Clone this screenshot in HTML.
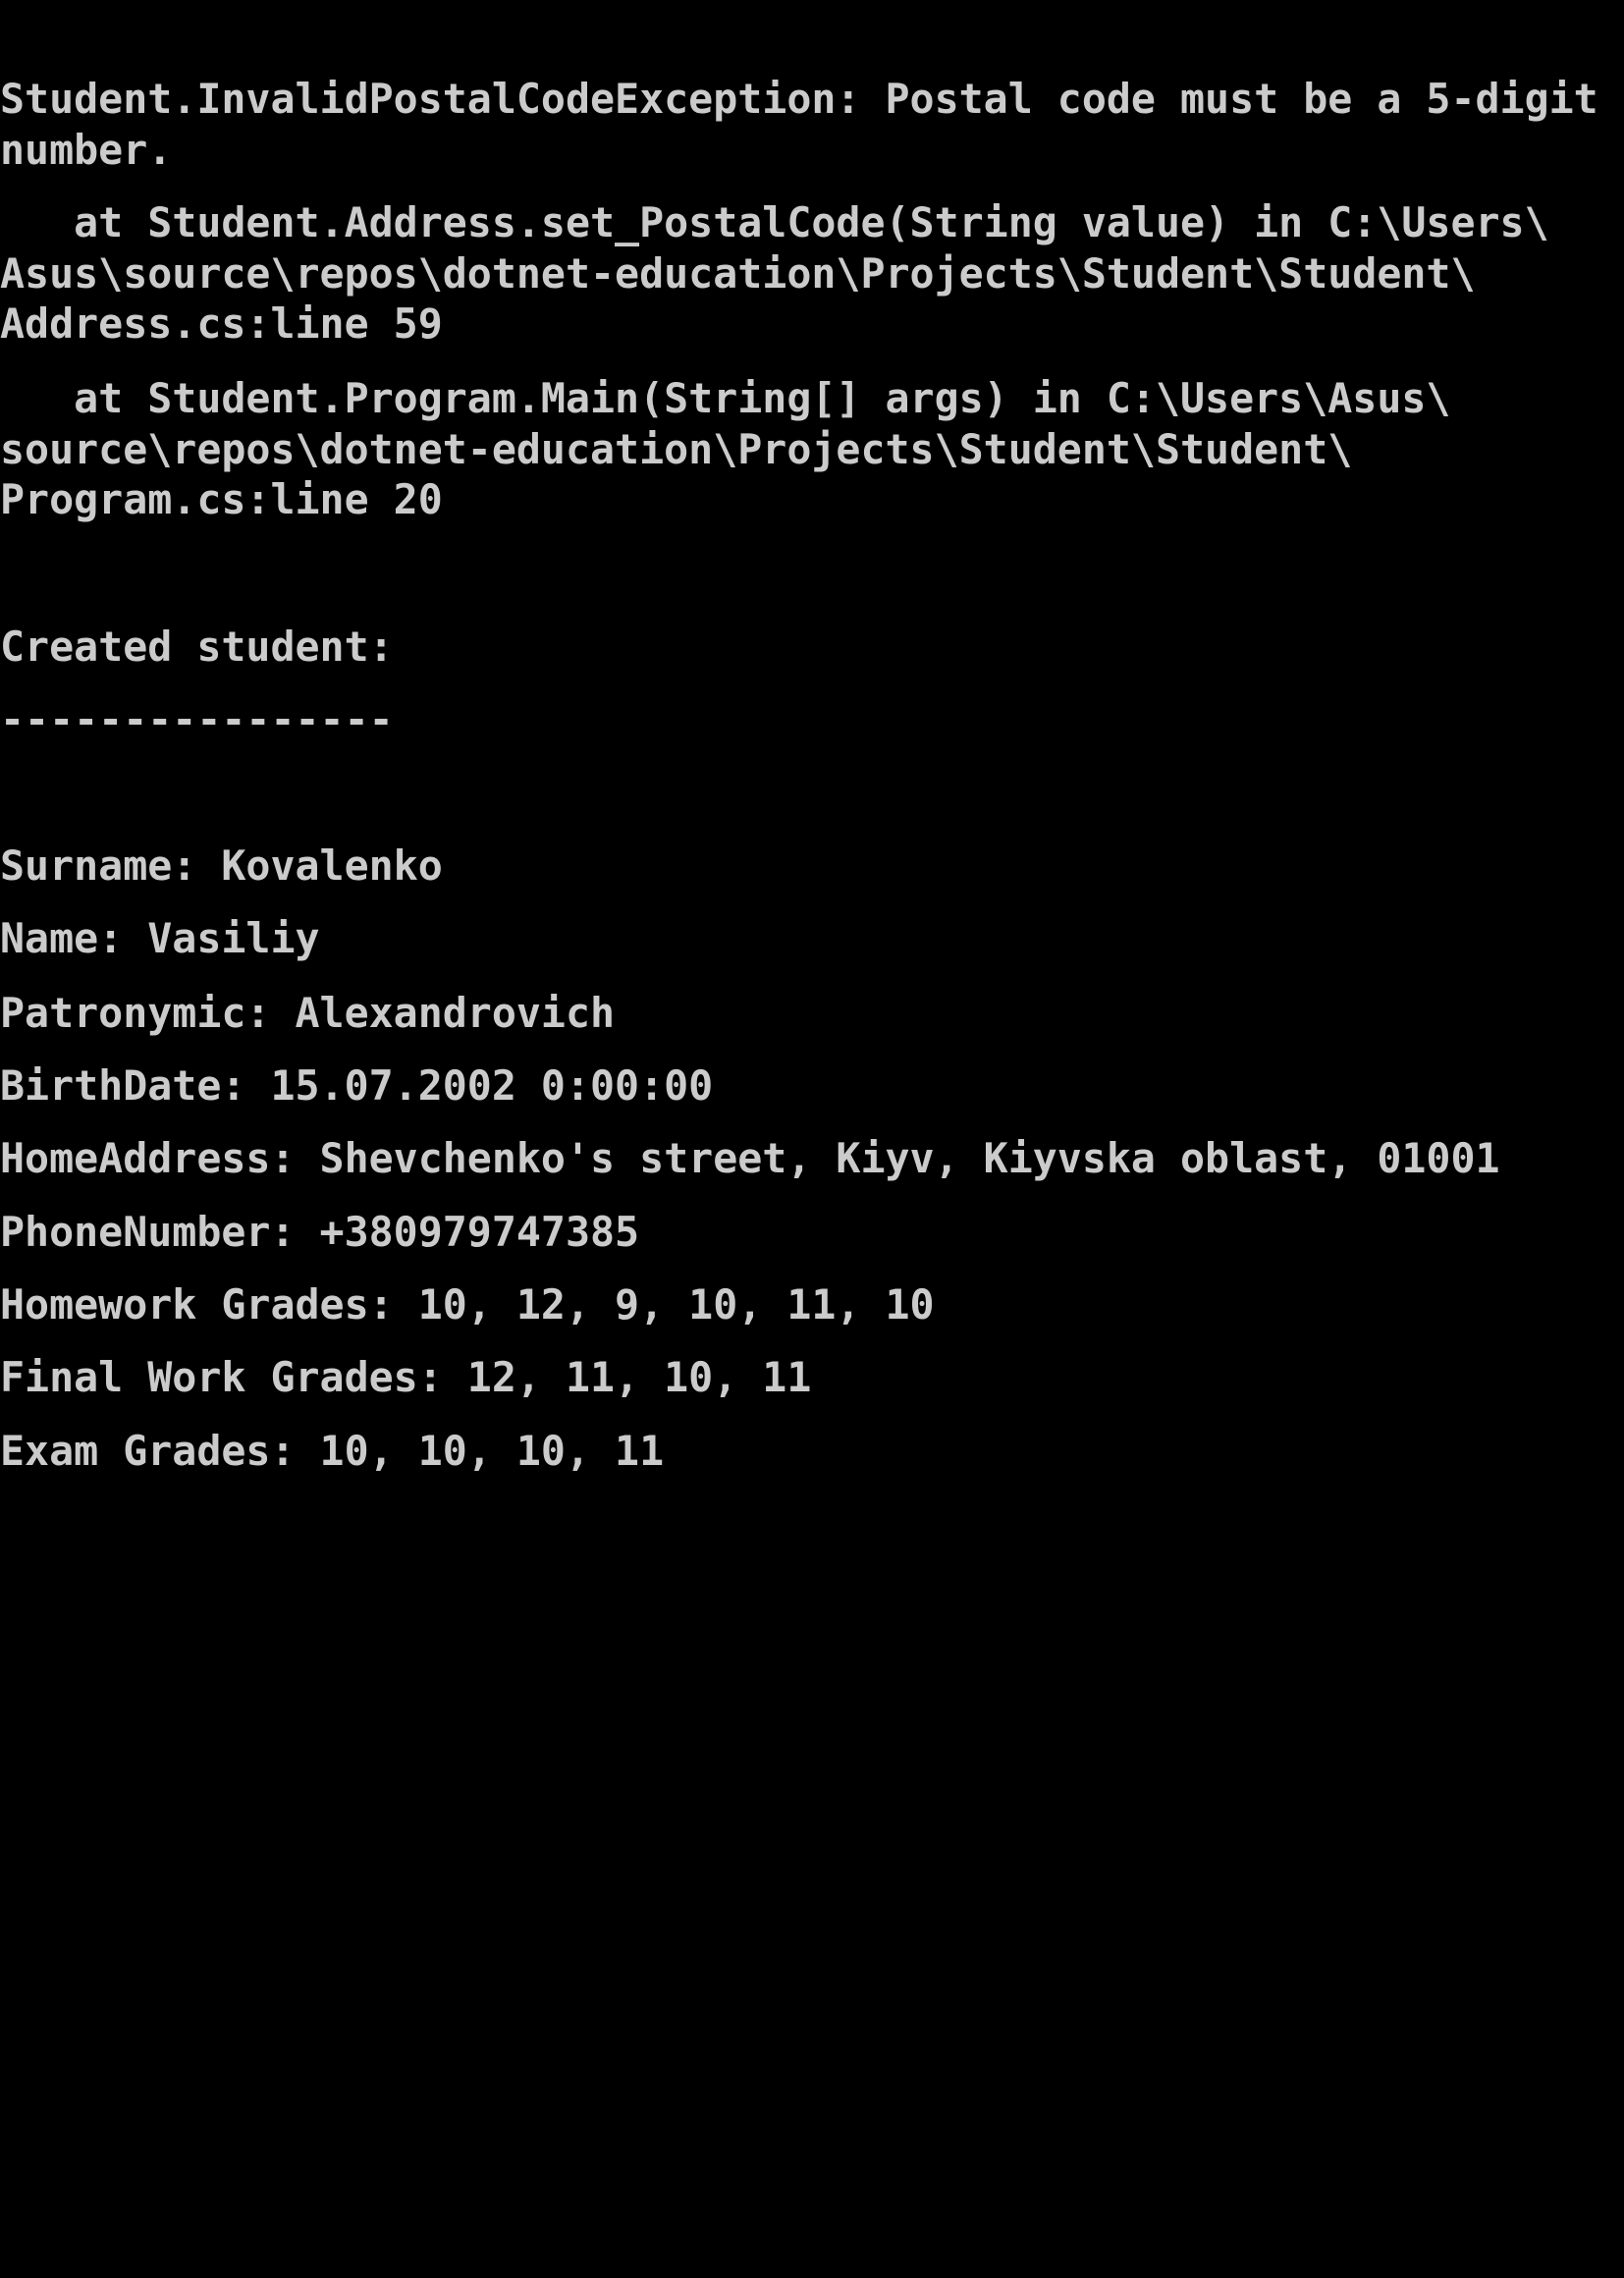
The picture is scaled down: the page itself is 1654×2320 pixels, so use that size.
<!DOCTYPE html>
<html><head><meta charset="utf-8"><style>
html,body{margin:0;padding:0;background:#000;width:1654px;height:2320px;overflow:hidden}
.w{position:absolute;left:0;top:1.5px;width:1654px}
.l{position:absolute;left:0;white-space:pre;font-family:"DejaVu Sans Mono","Liberation Mono",monospace;font-weight:bold;font-size:41.6px;line-height:52px;color:#cbcbcb}
</style></head><body><div class="w">
<div class="l" style="top:73px">Student.InvalidPostalCodeException: Postal code must be a 5-digit</div>
<div class="l" style="top:125px">number.</div>
<div class="l" style="top:199px">   at Student.Address.set_PostalCode(String value) in C:\Users\</div>
<div class="l" style="top:251px">Asus\source\repos\dotnet-education\Projects\Student\Student\</div>
<div class="l" style="top:302px">Address.cs:line 59</div>
<div class="l" style="top:378px">   at Student.Program.Main(String[] args) in C:\Users\Asus\</div>
<div class="l" style="top:430px">source\repos\dotnet-education\Projects\Student\Student\</div>
<div class="l" style="top:481px">Program.cs:line 20</div>
<div class="l" style="top:631px">Created student:</div>
<div class="l" style="top:705px">----------------</div>
<div class="l" style="top:854px">Surname: Kovalenko</div>
<div class="l" style="top:928px">Name: Vasiliy</div>
<div class="l" style="top:1004px">Patronymic: Alexandrovich</div>
<div class="l" style="top:1078px">BirthDate: 15.07.2002 0:00:00</div>
<div class="l" style="top:1152px">HomeAddress: Shevchenko's street, Kiyv, Kiyvska oblast, 01001</div>
<div class="l" style="top:1227px">PhoneNumber: +380979747385</div>
<div class="l" style="top:1301px">Homework Grades: 10, 12, 9, 10, 11, 10</div>
<div class="l" style="top:1375px">Final Work Grades: 12, 11, 10, 11</div>
<div class="l" style="top:1450px">Exam Grades: 10, 10, 10, 11</div>
</div></body></html>
